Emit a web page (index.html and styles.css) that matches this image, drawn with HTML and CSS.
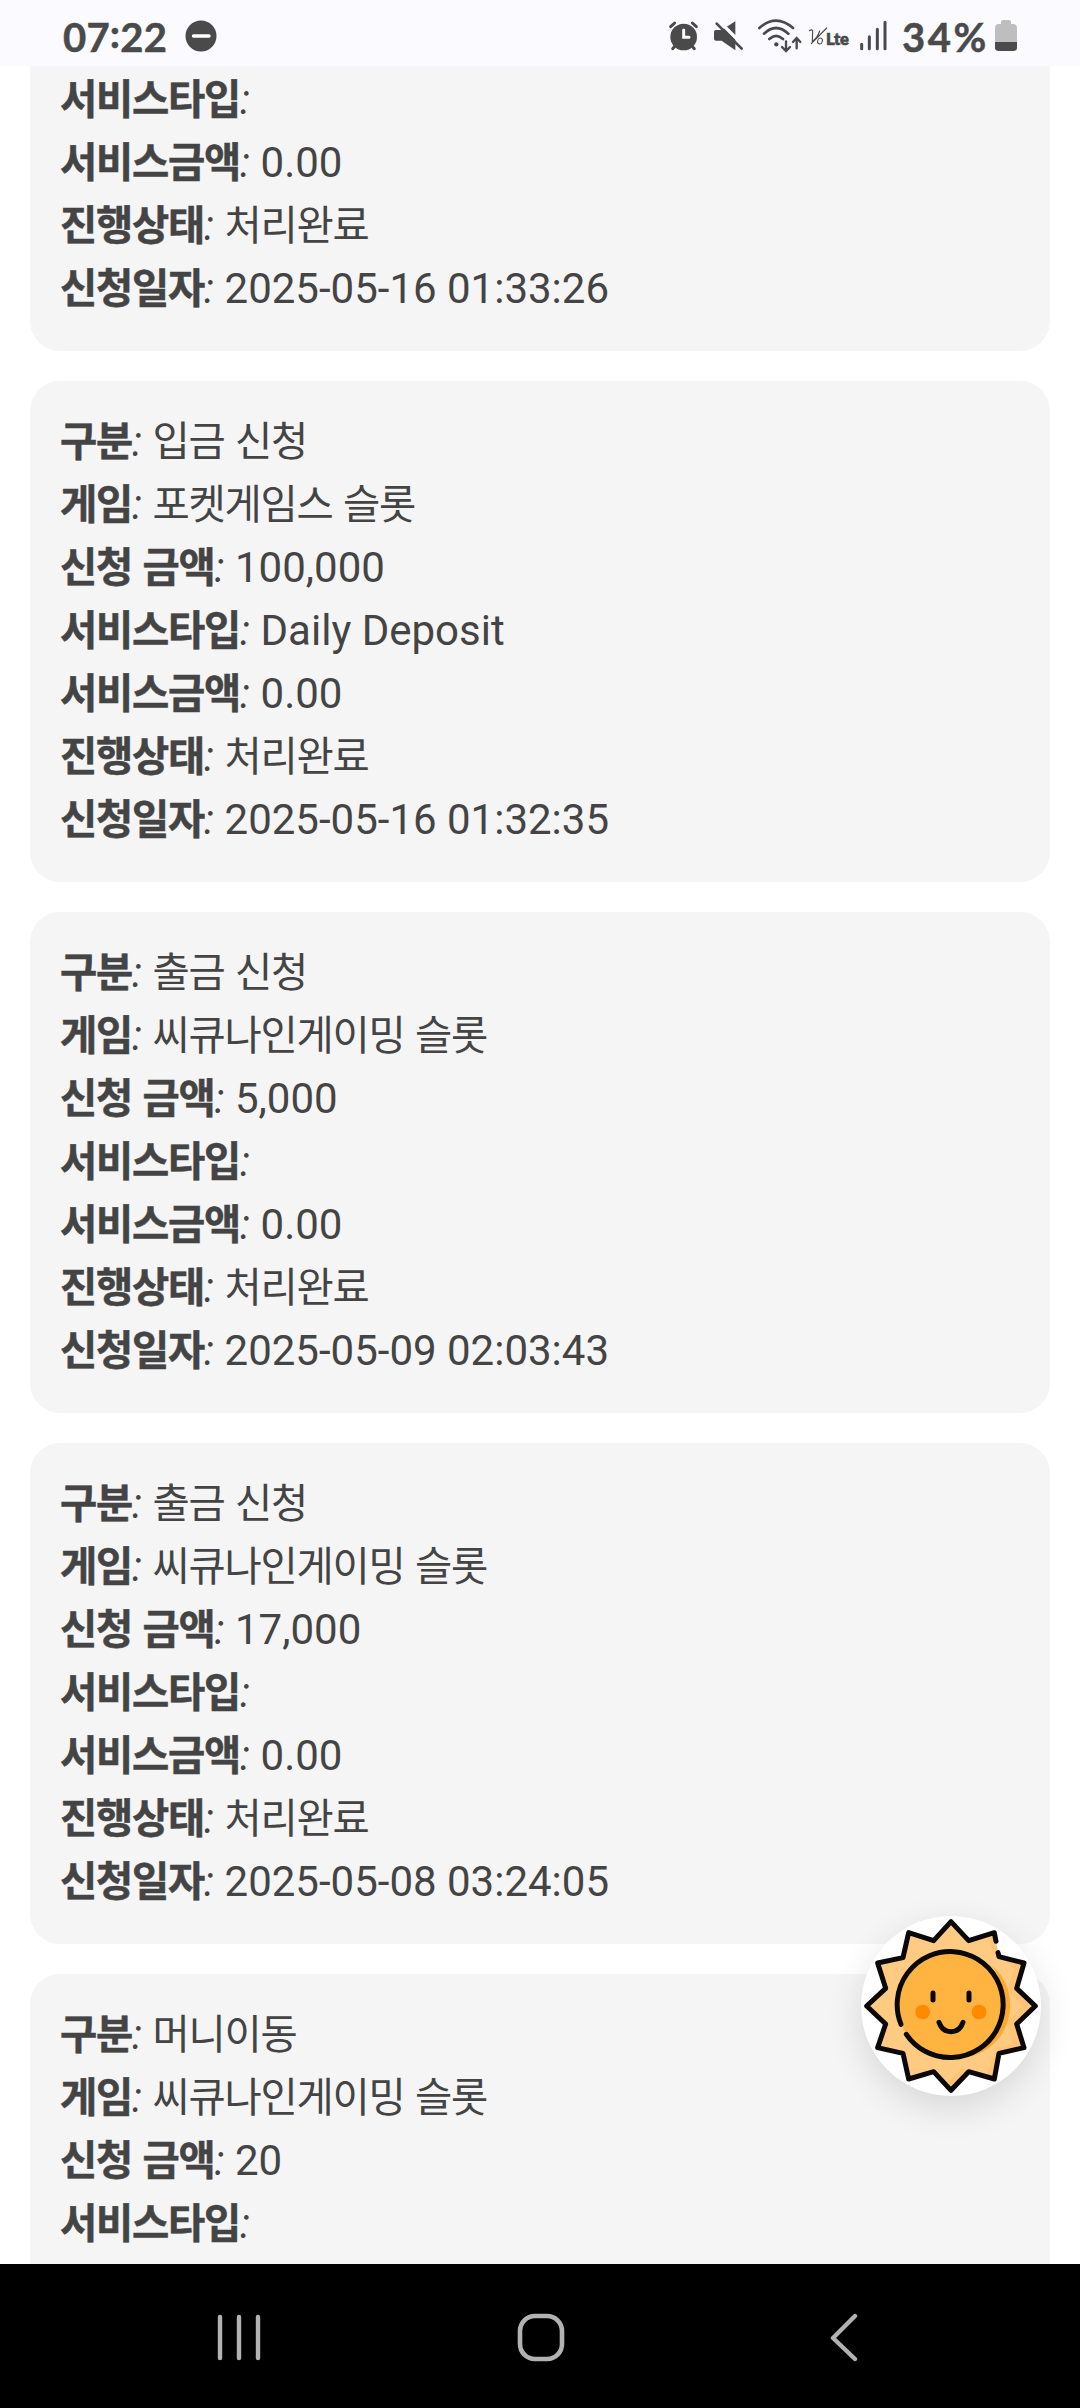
FILE: index.html
```html
<!DOCTYPE html>
<html lang="ko">
<head>
<meta charset="utf-8">
<title>신청 내역</title>
<link rel="stylesheet" href="styles.css">
</head>
<body>
<header class="status">
  <div class="status-left">
    <span class="clock">07<span class="clock-colon">:</span>22</span>
    <svg class="dnd" width="32" height="32" viewBox="0 0 32 32"><circle cx="16" cy="16" r="15.5" fill="#4a4a4a"/><path d="M8.5 16h15.5" stroke="#fff" stroke-width="3.4" stroke-linecap="round"/></svg>
  </div>
  <div class="status-right">
    <svg class="signals" width="224" height="40" viewBox="84 54 672 120" fill="none" stroke="#4a4a4a" stroke-linecap="round">
      <circle cx="134" cy="114" r="40" fill="#4a4a4a" stroke="none"/>
      <path d="M95 83l12-11M160 72l12 11M101 149l9-10M166 149l-9-10" stroke-width="9"/>
      <path d="M134 93v22h16" stroke="#fafaff" stroke-width="9"/>
      <path d="M231 93h17l41-26v87l-41-29h-17q-6 0-6-6v-20q0-6 6-6z" fill="#4a4a4a" stroke="none"/>
      <path d="M240 66l70 70" stroke="#fafaff" stroke-width="10"/>
      <path d="M233 74l75 75" stroke-width="8"/>
      <path d="M361 87q50-44 101 0M375 104q36-34 73 0M391 120q20-19 41 0" stroke-width="8"/>
      <circle cx="412" cy="136" r="6.5" fill="#4a4a4a" stroke="none"/>
      <path d="M441 127v28m-12-11l12 12l12-12M473 148v-30m-11 11l11-12l11 12" stroke-width="7"/>
      <path d="M511 95q8-5 10 1l-1 31q15-9 22-31M563 87l-46 47" stroke-width="3.4"/>
      <ellipse cx="543" cy="126" rx="7" ry="9" transform="rotate(20 543 126)" stroke-width="3"/>
      <text class="lte" x="561" y="138" textLength="69" lengthAdjust="spacingAndGlyphs">Lte</text>
      <path d="M668 136v13M691 113v36M715 91v58M738 70v79" stroke-width="9"/>
    </svg>
    <span class="percent">34%</span>
    <svg class="battery" width="22" height="32" viewBox="0 0 22 32"><path d="M6 3V2q0-2 2-2h6q2 0 2 2v2h2q4 0 4 4v15H0V8q0-4 4-4h2z" fill="#bebebf"/><path d="M0 22h22v6q0 3-4 3H4q-4 0-4-3z" fill="#4a4a4a"/></svg>
  </div>
</header>

<main class="history">
  <section class="card card-continued">
    <p class="row"><b>서비스타입</b><i>:</i></p>
    <p class="row"><b>서비스금액</b><i>:</i> 0.00</p>
    <p class="row"><b>진행상태</b><i>:</i> <span class="ko">처리완료</span></p>
    <p class="row"><b>신청일자</b><i>:</i> 2025-05-16 01:33:26</p>
  </section>
  <section class="card">
    <p class="row"><b>구분</b><i>:</i> <span class="ko">입금 신청</span></p>
    <p class="row"><b>게임</b><i>:</i> <span class="ko">포켓게임스 슬롯</span></p>
    <p class="row"><b>신청 금액</b><i>:</i> 100,000</p>
    <p class="row"><b>서비스타입</b><i>:</i> Daily Deposit</p>
    <p class="row"><b>서비스금액</b><i>:</i> 0.00</p>
    <p class="row"><b>진행상태</b><i>:</i> <span class="ko">처리완료</span></p>
    <p class="row"><b>신청일자</b><i>:</i> 2025-05-16 01:32:35</p>
  </section>
  <section class="card">
    <p class="row"><b>구분</b><i>:</i> <span class="ko">출금 신청</span></p>
    <p class="row"><b>게임</b><i>:</i> <span class="ko">씨큐나인게이밍 슬롯</span></p>
    <p class="row"><b>신청 금액</b><i>:</i> 5,000</p>
    <p class="row"><b>서비스타입</b><i>:</i></p>
    <p class="row"><b>서비스금액</b><i>:</i> 0.00</p>
    <p class="row"><b>진행상태</b><i>:</i> <span class="ko">처리완료</span></p>
    <p class="row"><b>신청일자</b><i>:</i> 2025-05-09 02:03:43</p>
  </section>
  <section class="card">
    <p class="row"><b>구분</b><i>:</i> <span class="ko">출금 신청</span></p>
    <p class="row"><b>게임</b><i>:</i> <span class="ko">씨큐나인게이밍 슬롯</span></p>
    <p class="row"><b>신청 금액</b><i>:</i> 17,000</p>
    <p class="row"><b>서비스타입</b><i>:</i></p>
    <p class="row"><b>서비스금액</b><i>:</i> 0.00</p>
    <p class="row"><b>진행상태</b><i>:</i> <span class="ko">처리완료</span></p>
    <p class="row"><b>신청일자</b><i>:</i> 2025-05-08 03:24:05</p>
  </section>
  <section class="card card-last">
    <p class="row"><b>구분</b><i>:</i> <span class="ko">머니이동</span></p>
    <p class="row"><b>게임</b><i>:</i> <span class="ko">씨큐나인게이밍 슬롯</span></p>
    <p class="row"><b>신청 금액</b><i>:</i> 20</p>
    <p class="row"><b>서비스타입</b><i>:</i></p>
  </section>
</main>

<div class="sun">
  <svg width="180" height="180" viewBox="63 78 540 540" fill="none" stroke="#0b0808" stroke-width="15" stroke-linecap="round" stroke-linejoin="round">
    <path fill="#ffcb83" stroke="none" d="M333 95L386 152L463 128L477 200L552 219L530 295L586 348L530 402L552 473L477 490L463 567L386 545L333 601L281 545L206 567L189 490L113 473L137 402L80 348L137 295L113 219L189 203L206 128L281 152Z"/>
    <path fill="#ffc06b" stroke="none" d="M463 128L477 200L552 219L530 295L586 348L530 402L552 473L477 490L463 567L440 555L470 470L518 465L500 400L547 348L500 300L523 236L500 215L455 180L445 140ZM333 601L386 545L366 535L318 580Z" opacity=".55"/>
    <circle cx="333" cy="348" r="158" fill="#ffb340" stroke="none"/>
    <path d="M454 225A175 175 0 0 1 360 504A158 158 0 0 0 454 225" fill="#fea92e" stroke="none"/>
    <path d="M468 154L463 128L386 152L333 95L281 152L206 128L189 203L113 219L137 295L80 348L137 402L113 473L189 490L206 567L281 545L333 601L386 545L463 567L477 490L552 473L530 402L586 348L530 295L552 219L477 200L474 188"/>
    <path d="M183 403A159 159 0 1 1 199 433"/>
    <path d="M279 309v21M387 309v21M297 397q10 28 36 28t36-28"/>
    <circle cx="248" cy="366" r="22" fill="#ff8a00" stroke="none"/>
    <circle cx="417" cy="366" r="22" fill="#ff8a00" stroke="none"/>
  </svg>
</div>

<nav class="navbar">
  <svg width="44" height="50" viewBox="0 0 44 50" stroke="#b2b2b2" stroke-width="4.4" stroke-linecap="round"><path d="M3 4v41M22 4v41M41 4v41"/></svg>
  <svg class="home" width="48" height="50" viewBox="0 0 48 50" fill="none" stroke="#b2b2b2" stroke-width="4.6"><rect x="3" y="3" width="42" height="43" rx="15"/></svg>
  <svg width="30" height="50" viewBox="0 0 30 50" fill="none" stroke="#b2b2b2" stroke-width="4.4" stroke-linecap="round" stroke-linejoin="round"><path d="M26 3L4 25l22 21"/></svg>
</nav>
</body>
</html>
```
FILE: styles.css
```css
* { box-sizing: border-box; }

body {
  margin: 0;
  height: 2408px;
  display: flex;
  flex-direction: column;
  overflow: hidden;
  background: #fff;
  color: #444;
  font-family: Roboto, "Noto Sans CJK KR", sans-serif;
}

.status {
  flex: none;
  height: 66px;
  padding: 8px 63px 0 63px;
  display: flex;
  align-items: center;
  justify-content: space-between;
  background: #fafaff;
  color: #4a4a4a;
  font: 700 40px/58px Lato, sans-serif;
  -webkit-text-stroke: .5px #4a4a4a;
}

.status-left,
.status-right { display: flex; align-items: center; }

.clock { width: 122px; letter-spacing: .2px; }
.clock-colon { position: relative; top: -4px; }
.signals { flex: none; margin-right: 11px; }
.percent { width: 93px; letter-spacing: 2.6px; }
.dnd,
.battery { flex: none; margin-bottom: 2px; }

.lte {
  font: 900 50px Lato, sans-serif;
  fill: #4a4a4a;
  stroke: #4a4a4a;
  stroke-width: 2px;
}

.history {
  flex: 1;
  min-height: 0;
  overflow: hidden;
  padding: 0 30px;
  display: flex;
  flex-direction: column;
  gap: 30px;
}

.card {
  flex: none;
  padding: 30px;
  border-radius: 30px;
  background: #f5f5f5;
}

.card-continued { padding-top: 3px; border-radius: 0 0 30px 30px; }
.card-last { padding-bottom: 60px; border-radius: 30px 30px 0 0; }

.row {
  margin: 0;
  height: 63px;
  font-size: 42px;
  line-height: 61px;
  white-space: nowrap;
}

.row b,
.row .ko {
  font-size: 40.5px;
  line-height: 1;
  letter-spacing: -1.25px;
  word-spacing: 1.6px;
}

.row b {
  font-weight: 700;
  -webkit-text-stroke: .5px #444;
}

.sun {
  position: absolute;
  left: 861px;
  top: 1916px;
  width: 180px;
  height: 180px;
  border-radius: 50%;
  background: #fff;
  box-shadow: 0 12px 36px rgba(0, 0, 0, .12);
}

.sun svg { display: block; }

.navbar {
  flex: none;
  height: 144px;
  padding: 4px 221px 0 217px;
  display: flex;
  align-items: center;
  background: #000;
}

.home { margin-left: 256px; margin-right: auto; }
```
